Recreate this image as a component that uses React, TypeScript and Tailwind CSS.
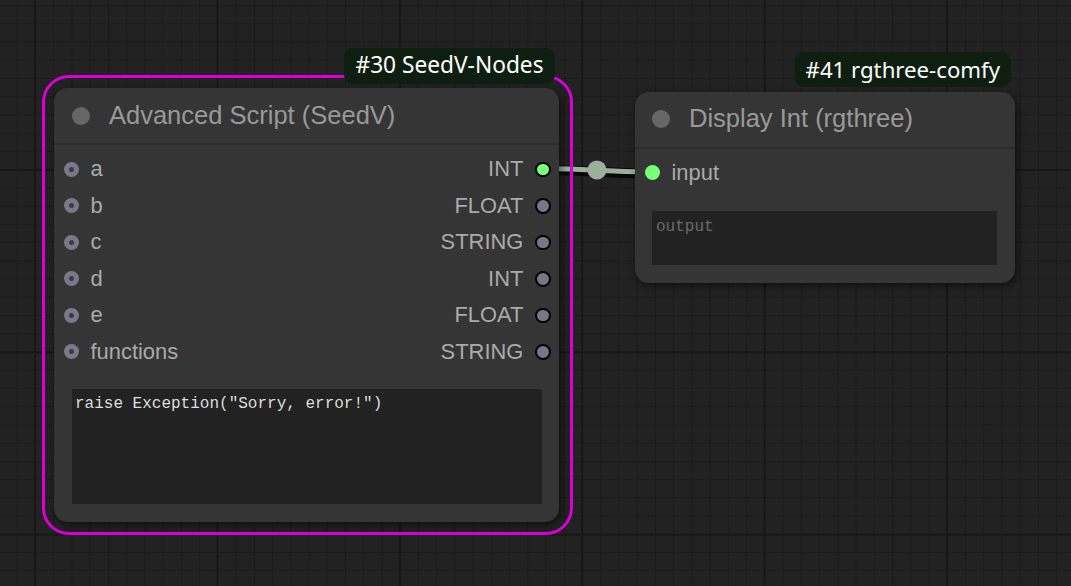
import React from "react";

type SlotKind = "ring" | "off" | "on" | "onflat";

function Dot({ kind }: { kind: SlotKind }) {
  if (kind === "ring")
    return (
      <span className="flex h-[15px] w-[15px] shrink-0 items-center justify-center rounded-full bg-[#7b7889]">
        <span className="h-[5px] w-[5px] rounded-full bg-[#3b3b42]" />
      </span>
    );
  if (kind === "onflat")
    return <span className="h-[15px] w-[15px] shrink-0 rounded-full bg-[#77ff77]" />;
  if (kind === "on")
    return <span className="h-[15.5px] w-[15.5px] shrink-0 rounded-full border-2 border-black bg-[#77ff77]" />;
  return <span className="h-[15.5px] w-[15.5px] shrink-0 rounded-full border-2 border-black bg-[#777788]" />;
}

function Row({
  input,
  inKind,
  output,
  outKind,
}: {
  input: string;
  inKind: SlotKind;
  output?: string;
  outKind?: SlotKind;
}) {
  return (
    <div className="flex h-[36.5px] items-center justify-between pl-[10.5px] pr-[8px]">
      <div className="flex items-center gap-[11.5px]">
        <Dot kind={inKind} />
        <span className="text-[21.9px] leading-none text-[#aaaaaa]">{input}</span>
      </div>
      {output && outKind && (
        <div className="flex items-center gap-[11.7px]">
          <span className="text-[21.9px] leading-none text-[#aaaaaa]">{output}</span>
          <Dot kind={outKind} />
        </div>
      )}
    </div>
  );
}

function Header({ title, pl }: { title: string; pl: string }) {
  return (
    <div className={`flex h-[57px] shrink-0 items-center gap-[19px] border-b-2 border-[#2d2d2d] ${pl}`}>
      <span className="h-[18px] w-[18px] shrink-0 rounded-full bg-[#676767]" />
      <span className="text-[25.5px] leading-none text-[#999999]">{title}</span>
    </div>
  );
}

function Badge({ text, cls }: { text: string; cls: string }) {
  return (
    <div
      className={`absolute right-[4px] bottom-[calc(100%+4.5px)] flex items-center rounded-[9px] bg-[#0e1f12] px-[11px] font-['Noto_Sans',sans-serif] leading-none whitespace-nowrap text-white ${cls}`}
    >
      {text}
    </div>
  );
}

export default function App() {
  return (
    <div className="relative h-[586px] w-[1071px] overflow-hidden bg-[#222222] bg-[image:linear-gradient(to_right,#171717_2px,transparent_2px),linear-gradient(to_bottom,#171717_2px,transparent_2px),linear-gradient(to_right,#1b1b1b_1px,transparent_1px),linear-gradient(to_bottom,#1b1b1b_1px,transparent_1px)] bg-[size:182.4px_182.4px,182.4px_182.4px,18.24px_18.24px,18.24px_18.24px] bg-[position:34px_169px,34px_169px,16.8px_5px,16.8px_5px] font-['Liberation_Sans',Arial,sans-serif]">
      {/* link */}
      <svg className="pointer-events-none absolute inset-0 h-full w-full" viewBox="0 0 1071 586">
        <path
          d="M542 170 C 597 170, 597 173.5, 652 173.5"
          fill="none"
          stroke="rgba(0,0,0,0.75)"
          strokeWidth="10"
        />
        <path
          d="M542 168.5 C 597 168.5, 597 172, 652 172"
          fill="none"
          stroke="#9dae9d"
          strokeWidth="5"
        />
        <circle cx="597" cy="170" r="9.5" fill="#9dae9d" />
      </svg>

      {/* selection outline */}
      <div className="pointer-events-none absolute left-[42px] top-[75.3px] h-[459.5px] w-[531px] rounded-[27px] border-[3.5px] border-[#d900d9]" />

      {/* Node #30 */}
      <div className="absolute left-[53.5px] top-[88px] flex h-[433.5px] w-[505px] flex-col rounded-[14px] bg-[#353535] shadow-[2px_3px_8px_rgba(0,0,0,0.55)]">
        <Badge text="#30 SeedV-Nodes" cls="h-[36px] text-[22.7px]" />
        <Header title="Advanced Script (SeedV)" pl="pl-[18.5px]" />
        <div className="flex flex-col pt-[6px]">
          <Row input="a" inKind="ring" output="INT" outKind="on" />
          <Row input="b" inKind="ring" output="FLOAT" outKind="off" />
          <Row input="c" inKind="ring" output="STRING" outKind="off" />
          <Row input="d" inKind="ring" output="INT" outKind="off" />
          <Row input="e" inKind="ring" output="FLOAT" outKind="off" />
          <Row input="functions" inKind="ring" output="STRING" outKind="off" />
        </div>
        <div className="mt-[19px] ml-[18.5px] mr-[16.5px] h-[114.5px] bg-[#222222] pl-[3px] pt-[5px] font-['Liberation_Mono',monospace] text-[16px] leading-[20px] whitespace-pre text-[#dddddd]">
          raise Exception("Sorry, error!")
        </div>
      </div>

      {/* Node #41 */}
      <div className="absolute left-[634.5px] top-[91.7px] flex h-[191px] w-[380.5px] flex-col rounded-[14px] bg-[#353535] shadow-[2px_3px_8px_rgba(0,0,0,0.55)]">
        <Badge text="#41 rgthree-comfy" cls="h-[35px] text-[22.2px]" />
        <Header title="Display Int (rgthree)" pl="pl-[17.5px]" />
        <div className="flex flex-col pt-[6px]">
          <Row input="input" inKind="onflat" />
        </div>
        <div className="mt-[20px] ml-[17.5px] mr-[18px] h-[54px] bg-[#222222] pl-[4px] pt-[6px] font-['Liberation_Mono',monospace] text-[16px] leading-[20px] text-[#6a6a6a]">
          output
        </div>
      </div>
    </div>
  );
}
